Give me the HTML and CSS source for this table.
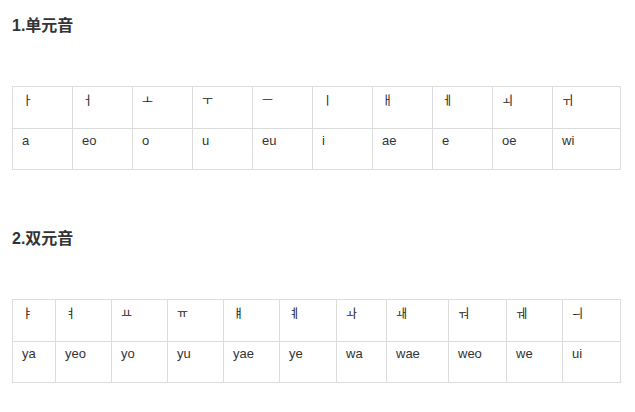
FILE: index.html
```html
<!DOCTYPE html>
<html lang="zh">
<head>
<meta charset="utf-8">
<link rel="stylesheet" href="styles.css">
</head>
<body>
<div class="page">
  <h2 class="title">1.单元音</h2>
  <table class="vowels single">
    <tr class="ko">
      <td>ㅏ</td><td>ㅓ</td><td>ㅗ</td><td>ㅜ</td><td>ㅡ</td><td>ㅣ</td><td>ㅐ</td><td>ㅔ</td><td>ㅚ</td><td>ㅟ</td>
    </tr>
    <tr>
      <td>a</td><td>eo</td><td>o</td><td>u</td><td>eu</td><td>i</td><td>ae</td><td>e</td><td>oe</td><td>wi</td>
    </tr>
  </table>
  <h2 class="title">2.双元音</h2>
  <table class="vowels double">
    <tr class="ko">
      <td>ㅑ</td><td>ㅕ</td><td>ㅛ</td><td>ㅠ</td><td>ㅒ</td><td>ㅖ</td><td>ㅘ</td><td>ㅙ</td><td>ㅝ</td><td>ㅞ</td><td>ㅢ</td>
    </tr>
    <tr>
      <td>ya</td><td>yeo</td><td>yo</td><td>yu</td><td>yae</td><td>ye</td><td>wa</td><td>wae</td><td>weo</td><td>we</td><td>ui</td>
    </tr>
  </table>
</div>
</body>
</html>
```
FILE: styles.css
```css
html, body {
  margin: 0;
  padding: 0;
  background: #fff;
}
.page {
  padding: 14px 15px 0 12px;
  color: #333;
  font-family: "Liberation Sans", Arial, "Noto Sans CJK SC", sans-serif;
}
.title {
  margin: 0 0 48px;
  font-size: 16px;
  line-height: 24px;
  font-weight: bold;
  color: #333;
}
.vowels {
  width: 609px;
  border-collapse: collapse;
  table-layout: fixed;
  margin: 0 0 57px;
}
.vowels.double {
  margin-bottom: 0;
}
.vowels td {
  box-sizing: border-box;
  border: 1px solid #dcdcdc;
  padding: 3px 9px 0 9px;
  height: 41px;
  vertical-align: top;
  font-size: 13px;
  line-height: 18px;
  color: #333;
  text-align: left;
}
.vowels .ko td {
  height: 42px;
  padding-top: 4px;
  font-family: "Noto Sans CJK KR", "Liberation Sans", sans-serif;
  font-size: 12px;
  line-height: 18px;
  color: #222;
}
.single td { width: 60px; }
.single td:last-child { width: 68px; }

.double td:nth-child(1) { width: 43px; }
.double td:nth-child(2) { width: 56px; }
.double td:nth-child(3) { width: 56px; }
.double td:nth-child(4) { width: 56px; }
.double td:nth-child(5) { width: 56px; }
.double td:nth-child(6) { width: 57px; }
.double td:nth-child(7) { width: 50px; }
.double td:nth-child(8) { width: 62px; }
.double td:nth-child(9) { width: 58px; }
.double td:nth-child(10) { width: 56px; }
.double td:nth-child(11) { width: 58px; }
```
